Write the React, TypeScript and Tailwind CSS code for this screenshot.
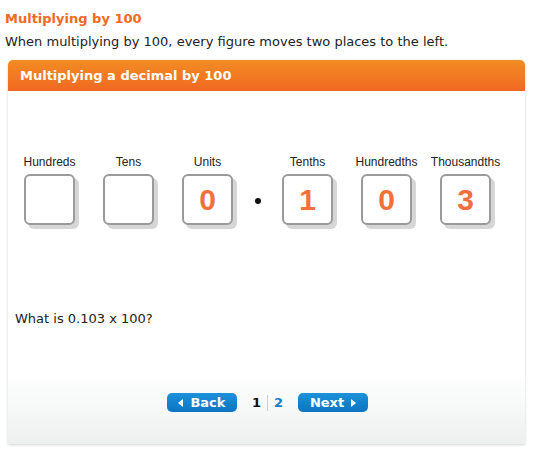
const columns = [
  { label: "Hundreds", value: "" },
  { label: "Tens", value: "" },
  { label: "Units", value: "0" },
  { label: "Tenths", value: "1" },
  { label: "Hundredths", value: "0" },
  { label: "Thousandths", value: "3" },
];

function DigitBox({ label, value }: { label: string; value: string }) {
  return (
    <div className="flex w-[51px] flex-col items-center">
      <span className="whitespace-nowrap font-['Liberation_Sans',Arial,sans-serif] text-[12px] leading-[14px] text-[#222]">
        {label}
      </span>
      <div className="mt-[5px] flex h-[51px] w-[51px] items-center justify-center rounded-[6px] border-2 border-[#9a9a9a] bg-white shadow-[4px_4px_0_#d6d6d6]">
        <span className="font-['Liberation_Sans',Arial,sans-serif] text-[30px] font-bold leading-none text-[#f2703c]">
          {value}
        </span>
      </div>
    </div>
  );
}

export default function App() {
  return (
    <div className="h-[454px] w-[535px] bg-white px-[5px] pt-[10px] font-['DejaVu_Sans',Verdana,sans-serif] text-[13px] text-[#222]">
      <h1 className="text-[13px] font-bold leading-[18px] text-[#f26a22]">Multiplying by 100</h1>
      <p className="mt-[5px] leading-[18px]">
        When multiplying by 100, every figure moves two places to the left.
      </p>

      <div className="mx-[3px] mt-[9px] w-[517px] rounded-t-[5px] bg-white shadow-[0_1px_3px_rgba(0,0,0,0.18)]">
        <div className="flex h-[31px] items-center rounded-t-[5px] bg-gradient-to-b from-[#f38c23] to-[#f06823] px-[12px] pt-[1px] font-bold text-white">
          Multiplying a decimal by 100
        </div>

        <div className="flex h-[353px] flex-col bg-gradient-to-b from-white from-80% to-[#eef0f0]">
          <div className="mt-[64px] flex gap-[28px] pl-[16px]">
            <DigitBox {...columns[0]} />
            <DigitBox {...columns[1]} />
            <div className="flex">
              <DigitBox {...columns[2]} />
              <div className="flex w-[49px] items-end justify-center pb-[21px]">
                <span className="h-[6px] w-[6px] rounded-full bg-[#111]" />
              </div>
              <DigitBox {...columns[3]} />
            </div>
            <DigitBox {...columns[4]} />
            <DigitBox {...columns[5]} />
          </div>

          <p className="mt-[85px] pl-[7px] leading-[18px]">What is 0.103 x 100?</p>

          <div className="mt-[65px] flex items-center justify-center pl-[2px]">
            <button className="flex h-[19px] w-[70px] items-center justify-center gap-[7px] rounded-[5px] bg-gradient-to-b from-[#1b92da] to-[#0d74c1] font-bold text-white">
              <span className="h-0 w-0 border-y-[4px] border-r-[5px] border-y-transparent border-r-white" />
              Back
            </button>
            <div className="mx-[15px] flex items-center font-bold">
              <span className="text-[#111]">1</span>
              <span className="mx-[6px] h-[16px] w-px bg-[#ccc]" />
              <span className="text-[#1a7cc1]">2</span>
            </div>
            <button className="flex h-[19px] w-[70px] items-center justify-center gap-[7px] rounded-[5px] bg-gradient-to-b from-[#1b92da] to-[#0d74c1] font-bold text-white">
              Next
              <span className="h-0 w-0 border-y-[4px] border-l-[5px] border-y-transparent border-l-white" />
            </button>
          </div>
        </div>
      </div>
    </div>
  );
}
